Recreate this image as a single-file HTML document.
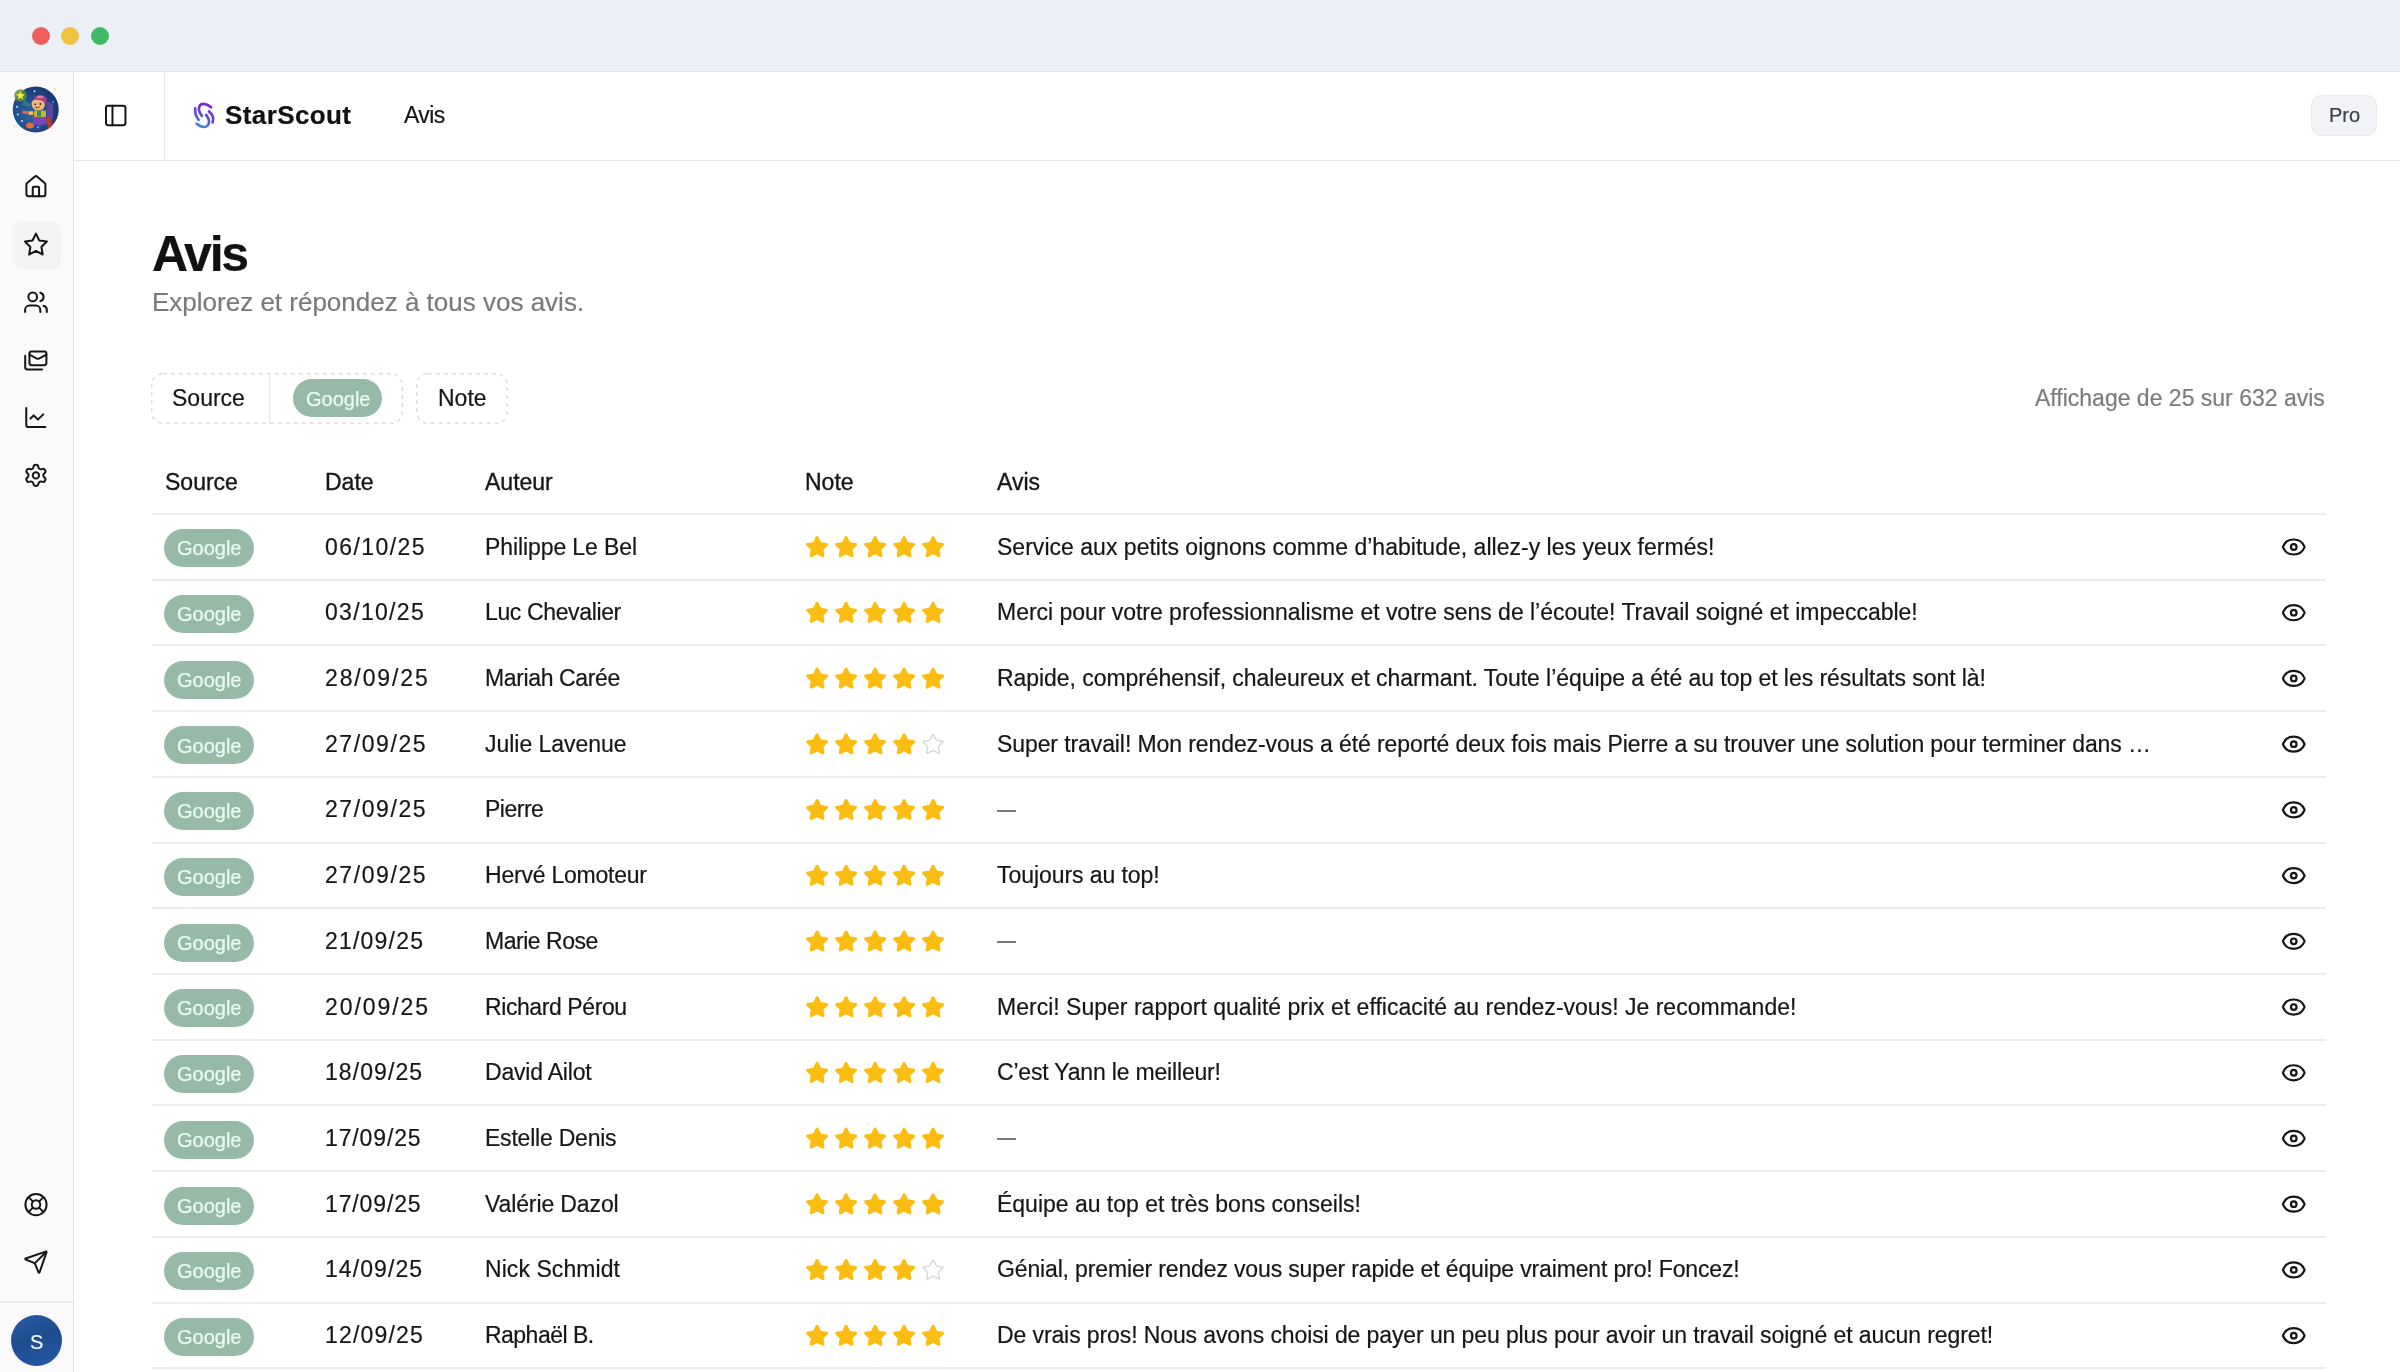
<!DOCTYPE html>
<html><head><meta charset="utf-8"><style>
*{box-sizing:border-box;margin:0;padding:0}
html,body{width:2400px;height:1372px;overflow:hidden;background:#fff;font-family:"Liberation Sans",sans-serif;color:#111;position:relative}
.a{position:absolute}
.t{position:absolute;white-space:pre;line-height:1;will-change:transform;-webkit-text-stroke:0.2px currentColor}
.tl{position:absolute;width:18px;height:18px;border-radius:50%;top:27px}
.badge{position:absolute;width:90px;height:38px;border-radius:19px;background:#97B9A7}
.hl{position:absolute;left:152px;width:2174px;height:2px;background:#EDEDED}
#ov{position:absolute;left:0;top:0;width:2400px;height:1372px;fill:none;stroke-linecap:round;stroke-linejoin:round}
</style></head><body>
<div class="a" style="left:0;top:0;width:2400px;height:72px;background:#ECF0F6"></div>
<div class="a" style="left:0;top:71px;width:2400px;height:1px;background:#E1E4E9"></div>
<div class="tl" style="left:32px;background:#EE5F5B"></div><div class="tl" style="left:61px;background:#EFC23F"></div><div class="tl" style="left:91px;background:#40B866"></div>
<div class="a" style="left:0;top:72px;width:74px;height:1300px;background:#FAFAFA;border-right:1px solid #E6E6E6"></div>
<div class="a" style="left:12px;top:221px;width:49px;height:48px;border-radius:9px;background:#F4F4F4"></div>
<div class="a" style="left:0;top:1301px;width:73px;height:2px;background:#EBEBEB"></div>
<div class="a" style="left:10.5px;top:1315.3px;width:51px;height:51px;border-radius:50%;background:linear-gradient(160deg,#2A5BA6 0%,#1E4C8E 45%,#2658A8 100%)"></div>
<div class="t" style="left:29.5px;top:1331.77px;font-size:20px;color:#F4FBFF;">S</div>
<div class="a" style="left:74px;top:72px;width:2326px;height:89px;background:#fff;border-bottom:1px solid #E6E6E6"></div>
<div class="a" style="left:164px;top:72px;width:1px;height:88px;background:#E6E6E6"></div>
<div class="t" style="left:225px;top:101.99px;font-size:26px;color:#111;font-weight:700;letter-spacing:0.4px;">StarScout</div>
<div class="t" style="left:404px;top:104.03px;font-size:23px;color:#161616;letter-spacing:-0.6px;">Avis</div>
<div class="a" style="left:2311px;top:95px;width:66px;height:41px;border-radius:10px;background:#F1F3F7;border:1px solid #E8EBEF"></div>
<div class="t" style="left:2328.5px;top:105.07px;font-size:20px;color:#3B4049;">Pro</div>
<div class="t" style="left:151.5px;top:228.68px;font-size:50px;color:#111;font-weight:700;letter-spacing:-2.2px;">Avis</div>
<div class="t" style="left:152px;top:288.99px;font-size:26px;color:#7A7A7A;">Explorez et répondez à tous vos avis.</div>
<svg class="a" style="left:150px;top:372px" width="260" height="54"><rect x="1.75" y="1.75" width="250.5" height="49.5" rx="11" fill="none" stroke="#DEDEDE" stroke-width="1.5" stroke-dasharray="4 4"/></svg>
<div class="a" style="left:269px;top:374px;width:1px;height:49px;background:#E6E6E6"></div>
<div class="t" style="left:172px;top:387.13px;font-size:23px;color:#161616;">Source</div>
<div class="badge" style="left:293px;top:379px;width:89px"></div>
<div class="t" style="left:306px;top:388.57px;font-size:20px;color:#EAFBF0;-webkit-text-stroke:0.25px #EAFBF0;">Google</div>
<svg class="a" style="left:415px;top:372px" width="96" height="54"><rect x="1.75" y="1.75" width="90.5" height="49.5" rx="11" fill="none" stroke="#DEDEDE" stroke-width="1.5" stroke-dasharray="4 4"/></svg>
<div class="t" style="left:437.5px;top:387.13px;font-size:23px;color:#161616;">Note</div>
<div class="t" style="right:75px;top:387.03px;font-size:23px;color:#7C7C7C">Affichage de 25 sur 632 avis</div>
<div class="t" style="left:165px;top:470.53px;font-size:23px;color:#161616;-webkit-text-stroke:0.35px currentColor;">Source</div>
<div class="t" style="left:325px;top:470.53px;font-size:23px;color:#161616;-webkit-text-stroke:0.35px currentColor;">Date</div>
<div class="t" style="left:485px;top:470.53px;font-size:23px;color:#161616;-webkit-text-stroke:0.35px currentColor;">Auteur</div>
<div class="t" style="left:805px;top:470.53px;font-size:23px;color:#161616;-webkit-text-stroke:0.35px currentColor;">Note</div>
<div class="t" style="left:997px;top:470.53px;font-size:23px;color:#161616;-webkit-text-stroke:0.35px currentColor;">Avis</div>
<div class="hl" style="top:513px"></div>
<div class="badge" style="left:164px;top:529.30px"></div>
<div class="t" style="left:177px;top:538.37px;font-size:20px;color:#EAFBF0;-webkit-text-stroke:0.25px #EAFBF0;">Google</div>
<div class="t" style="left:325px;top:535.53px;font-size:23px;color:#161616;letter-spacing:1.437px;">06/10/25</div>
<div class="t" style="left:485px;top:535.53px;font-size:23px;color:#161616;letter-spacing:-0.095px;">Philippe Le Bel</div>
<div class="t" style="left:997px;top:535.53px;font-size:23px;color:#161616;letter-spacing:0.022px;">Service aux petits oignons comme d’habitude, allez-y les yeux fermés!</div>
<div class="hl" style="top:578.72px"></div>
<div class="badge" style="left:164px;top:595.02px"></div>
<div class="t" style="left:177px;top:604.09px;font-size:20px;color:#EAFBF0;-webkit-text-stroke:0.25px #EAFBF0;">Google</div>
<div class="t" style="left:325px;top:601.25px;font-size:23px;color:#161616;letter-spacing:1.309px;">03/10/25</div>
<div class="t" style="left:485px;top:601.25px;font-size:23px;color:#161616;letter-spacing:-0.364px;">Luc Chevalier</div>
<div class="t" style="left:997px;top:601.25px;font-size:23px;color:#161616;letter-spacing:-0.026px;">Merci pour votre professionnalisme et votre sens de l’écoute! Travail soigné et impeccable!</div>
<div class="hl" style="top:644.44px"></div>
<div class="badge" style="left:164px;top:660.74px"></div>
<div class="t" style="left:177px;top:669.81px;font-size:20px;color:#EAFBF0;-webkit-text-stroke:0.25px #EAFBF0;">Google</div>
<div class="t" style="left:325px;top:666.97px;font-size:23px;color:#161616;letter-spacing:1.895px;">28/09/25</div>
<div class="t" style="left:485px;top:666.97px;font-size:23px;color:#161616;letter-spacing:-0.377px;">Mariah Carée</div>
<div class="t" style="left:997px;top:666.97px;font-size:23px;color:#161616;letter-spacing:-0.054px;">Rapide, compréhensif, chaleureux et charmant. Toute l’équipe a été au top et les résultats sont là!</div>
<div class="hl" style="top:710.16px"></div>
<div class="badge" style="left:164px;top:726.46px"></div>
<div class="t" style="left:177px;top:735.53px;font-size:20px;color:#EAFBF0;-webkit-text-stroke:0.25px #EAFBF0;">Google</div>
<div class="t" style="left:325px;top:732.69px;font-size:23px;color:#161616;letter-spacing:1.58px;">27/09/25</div>
<div class="t" style="left:485px;top:732.69px;font-size:23px;color:#161616;letter-spacing:-0.029px;">Julie Lavenue</div>
<div class="t" style="left:997px;top:732.69px;font-size:23px;color:#161616;letter-spacing:-0.095px;">Super travail! Mon rendez-vous a été reporté deux fois mais Pierre a su trouver une solution pour terminer dans …</div>
<div class="hl" style="top:775.88px"></div>
<div class="badge" style="left:164px;top:792.18px"></div>
<div class="t" style="left:177px;top:801.25px;font-size:20px;color:#EAFBF0;-webkit-text-stroke:0.25px #EAFBF0;">Google</div>
<div class="t" style="left:325px;top:798.41px;font-size:23px;color:#161616;letter-spacing:1.58px;">27/09/25</div>
<div class="t" style="left:485px;top:798.41px;font-size:23px;color:#161616;letter-spacing:-0.492px;">Pierre</div>
<div class="a" style="left:997px;top:810px;width:19px;height:2px;background:#7A7A7A"></div>
<div class="hl" style="top:841.60px"></div>
<div class="badge" style="left:164px;top:857.90px"></div>
<div class="t" style="left:177px;top:866.97px;font-size:20px;color:#EAFBF0;-webkit-text-stroke:0.25px #EAFBF0;">Google</div>
<div class="t" style="left:325px;top:864.13px;font-size:23px;color:#161616;letter-spacing:1.58px;">27/09/25</div>
<div class="t" style="left:485px;top:864.13px;font-size:23px;color:#161616;letter-spacing:-0.227px;">Hervé Lomoteur</div>
<div class="t" style="left:997px;top:864.13px;font-size:23px;color:#161616;letter-spacing:-0.065px;">Toujours au top!</div>
<div class="hl" style="top:907.32px"></div>
<div class="badge" style="left:164px;top:923.62px"></div>
<div class="t" style="left:177px;top:932.69px;font-size:20px;color:#EAFBF0;-webkit-text-stroke:0.25px #EAFBF0;">Google</div>
<div class="t" style="left:325px;top:929.85px;font-size:23px;color:#161616;letter-spacing:1.209px;">21/09/25</div>
<div class="t" style="left:485px;top:929.85px;font-size:23px;color:#161616;letter-spacing:-0.467px;">Marie Rose</div>
<div class="a" style="left:997px;top:941px;width:19px;height:2px;background:#7A7A7A"></div>
<div class="hl" style="top:973.04px"></div>
<div class="badge" style="left:164px;top:989.34px"></div>
<div class="t" style="left:177px;top:998.41px;font-size:20px;color:#EAFBF0;-webkit-text-stroke:0.25px #EAFBF0;">Google</div>
<div class="t" style="left:325px;top:995.57px;font-size:23px;color:#161616;letter-spacing:1.923px;">20/09/25</div>
<div class="t" style="left:485px;top:995.57px;font-size:23px;color:#161616;letter-spacing:-0.411px;">Richard Pérou</div>
<div class="t" style="left:997px;top:995.57px;font-size:23px;color:#161616;letter-spacing:0.011px;">Merci! Super rapport qualité prix et efficacité au rendez-vous! Je recommande!</div>
<div class="hl" style="top:1038.76px"></div>
<div class="badge" style="left:164px;top:1055.06px"></div>
<div class="t" style="left:177px;top:1064.13px;font-size:20px;color:#EAFBF0;-webkit-text-stroke:0.25px #EAFBF0;">Google</div>
<div class="t" style="left:325px;top:1061.29px;font-size:23px;color:#161616;letter-spacing:1.08px;">18/09/25</div>
<div class="t" style="left:485px;top:1061.29px;font-size:23px;color:#161616;letter-spacing:-0.204px;">David Ailot</div>
<div class="t" style="left:997px;top:1061.29px;font-size:23px;color:#161616;letter-spacing:-0.182px;">C’est Yann le meilleur!</div>
<div class="hl" style="top:1104.48px"></div>
<div class="badge" style="left:164px;top:1120.78px"></div>
<div class="t" style="left:177px;top:1129.85px;font-size:20px;color:#EAFBF0;-webkit-text-stroke:0.25px #EAFBF0;">Google</div>
<div class="t" style="left:325px;top:1127.01px;font-size:23px;color:#161616;letter-spacing:0.866px;">17/09/25</div>
<div class="t" style="left:485px;top:1127.01px;font-size:23px;color:#161616;letter-spacing:-0.219px;">Estelle Denis</div>
<div class="a" style="left:997px;top:1138px;width:19px;height:2px;background:#7A7A7A"></div>
<div class="hl" style="top:1170.20px"></div>
<div class="badge" style="left:164px;top:1186.50px"></div>
<div class="t" style="left:177px;top:1195.57px;font-size:20px;color:#EAFBF0;-webkit-text-stroke:0.25px #EAFBF0;">Google</div>
<div class="t" style="left:325px;top:1192.73px;font-size:23px;color:#161616;letter-spacing:0.866px;">17/09/25</div>
<div class="t" style="left:485px;top:1192.73px;font-size:23px;color:#161616;letter-spacing:-0.114px;">Valérie Dazol</div>
<div class="t" style="left:997px;top:1192.73px;font-size:23px;color:#161616;letter-spacing:-0.014px;">Équipe au top et très bons conseils!</div>
<div class="hl" style="top:1235.92px"></div>
<div class="badge" style="left:164px;top:1252.22px"></div>
<div class="t" style="left:177px;top:1261.29px;font-size:20px;color:#EAFBF0;-webkit-text-stroke:0.25px #EAFBF0;">Google</div>
<div class="t" style="left:325px;top:1258.45px;font-size:23px;color:#161616;letter-spacing:1.08px;">14/09/25</div>
<div class="t" style="left:485px;top:1258.45px;font-size:23px;color:#161616;letter-spacing:0.063px;">Nick Schmidt</div>
<div class="t" style="left:997px;top:1258.45px;font-size:23px;color:#161616;letter-spacing:-0.145px;">Génial, premier rendez vous super rapide et équipe vraiment pro! Foncez!</div>
<div class="hl" style="top:1301.64px"></div>
<div class="badge" style="left:164px;top:1317.94px"></div>
<div class="t" style="left:177px;top:1327.01px;font-size:20px;color:#EAFBF0;-webkit-text-stroke:0.25px #EAFBF0;">Google</div>
<div class="t" style="left:325px;top:1324.17px;font-size:23px;color:#161616;letter-spacing:1.166px;">12/09/25</div>
<div class="t" style="left:485px;top:1324.17px;font-size:23px;color:#161616;letter-spacing:-0.523px;">Raphaël B.</div>
<div class="t" style="left:997px;top:1324.17px;font-size:23px;color:#161616;letter-spacing:-0.103px;">De vrais pros! Nous avons choisi de payer un peu plus pour avoir un travail soigné et aucun regret!</div>
<div class="hl" style="top:1367.36px"></div>
<svg id="ov" viewBox="0 0 2400 1372">
<path transform="translate(805.10,535.10)" d="M11.525 2.295a.53.53 0 0 1 .95 0l2.31 4.679a2.123 2.123 0 0 0 1.595 1.16l5.166.756a.53.53 0 0 1 .294.904l-3.736 3.638a2.123 2.123 0 0 0-.611 1.878l.882 5.14a.53.53 0 0 1-.771.56l-4.618-2.428a2.122 2.122 0 0 0-1.973 0L6.396 21.01a.53.53 0 0 1-.77-.56l.881-5.139a2.122 2.122 0 0 0-.611-1.879L2.16 9.795a.53.53 0 0 1 .294-.906l5.165-.755a2.122 2.122 0 0 0 1.597-1.16z" fill="#FBBD12" stroke="#FBBD12" stroke-width="2"/>
<path transform="translate(834.10,535.10)" d="M11.525 2.295a.53.53 0 0 1 .95 0l2.31 4.679a2.123 2.123 0 0 0 1.595 1.16l5.166.756a.53.53 0 0 1 .294.904l-3.736 3.638a2.123 2.123 0 0 0-.611 1.878l.882 5.14a.53.53 0 0 1-.771.56l-4.618-2.428a2.122 2.122 0 0 0-1.973 0L6.396 21.01a.53.53 0 0 1-.77-.56l.881-5.139a2.122 2.122 0 0 0-.611-1.879L2.16 9.795a.53.53 0 0 1 .294-.906l5.165-.755a2.122 2.122 0 0 0 1.597-1.16z" fill="#FBBD12" stroke="#FBBD12" stroke-width="2"/>
<path transform="translate(863.10,535.10)" d="M11.525 2.295a.53.53 0 0 1 .95 0l2.31 4.679a2.123 2.123 0 0 0 1.595 1.16l5.166.756a.53.53 0 0 1 .294.904l-3.736 3.638a2.123 2.123 0 0 0-.611 1.878l.882 5.14a.53.53 0 0 1-.771.56l-4.618-2.428a2.122 2.122 0 0 0-1.973 0L6.396 21.01a.53.53 0 0 1-.77-.56l.881-5.139a2.122 2.122 0 0 0-.611-1.879L2.16 9.795a.53.53 0 0 1 .294-.906l5.165-.755a2.122 2.122 0 0 0 1.597-1.16z" fill="#FBBD12" stroke="#FBBD12" stroke-width="2"/>
<path transform="translate(892.10,535.10)" d="M11.525 2.295a.53.53 0 0 1 .95 0l2.31 4.679a2.123 2.123 0 0 0 1.595 1.16l5.166.756a.53.53 0 0 1 .294.904l-3.736 3.638a2.123 2.123 0 0 0-.611 1.878l.882 5.14a.53.53 0 0 1-.771.56l-4.618-2.428a2.122 2.122 0 0 0-1.973 0L6.396 21.01a.53.53 0 0 1-.77-.56l.881-5.139a2.122 2.122 0 0 0-.611-1.879L2.16 9.795a.53.53 0 0 1 .294-.906l5.165-.755a2.122 2.122 0 0 0 1.597-1.16z" fill="#FBBD12" stroke="#FBBD12" stroke-width="2"/>
<path transform="translate(921.10,535.10)" d="M11.525 2.295a.53.53 0 0 1 .95 0l2.31 4.679a2.123 2.123 0 0 0 1.595 1.16l5.166.756a.53.53 0 0 1 .294.904l-3.736 3.638a2.123 2.123 0 0 0-.611 1.878l.882 5.14a.53.53 0 0 1-.771.56l-4.618-2.428a2.122 2.122 0 0 0-1.973 0L6.396 21.01a.53.53 0 0 1-.77-.56l.881-5.139a2.122 2.122 0 0 0-.611-1.879L2.16 9.795a.53.53 0 0 1 .294-.906l5.165-.755a2.122 2.122 0 0 0 1.597-1.16z" fill="#FBBD12" stroke="#FBBD12" stroke-width="2"/>
<g transform="translate(2280.85,534.10) scale(1.075)" stroke="#161616" stroke-width="2.046511627906977"><path d="M2.062 12.348a1 1 0 0 1 0-.696 10.75 10.75 0 0 1 19.876 0 1 1 0 0 1 0 .696 10.75 10.75 0 0 1-19.876 0"/><circle cx="12" cy="12" r="2.6"/></g>
<path transform="translate(805.10,600.82)" d="M11.525 2.295a.53.53 0 0 1 .95 0l2.31 4.679a2.123 2.123 0 0 0 1.595 1.16l5.166.756a.53.53 0 0 1 .294.904l-3.736 3.638a2.123 2.123 0 0 0-.611 1.878l.882 5.14a.53.53 0 0 1-.771.56l-4.618-2.428a2.122 2.122 0 0 0-1.973 0L6.396 21.01a.53.53 0 0 1-.77-.56l.881-5.139a2.122 2.122 0 0 0-.611-1.879L2.16 9.795a.53.53 0 0 1 .294-.906l5.165-.755a2.122 2.122 0 0 0 1.597-1.16z" fill="#FBBD12" stroke="#FBBD12" stroke-width="2"/>
<path transform="translate(834.10,600.82)" d="M11.525 2.295a.53.53 0 0 1 .95 0l2.31 4.679a2.123 2.123 0 0 0 1.595 1.16l5.166.756a.53.53 0 0 1 .294.904l-3.736 3.638a2.123 2.123 0 0 0-.611 1.878l.882 5.14a.53.53 0 0 1-.771.56l-4.618-2.428a2.122 2.122 0 0 0-1.973 0L6.396 21.01a.53.53 0 0 1-.77-.56l.881-5.139a2.122 2.122 0 0 0-.611-1.879L2.16 9.795a.53.53 0 0 1 .294-.906l5.165-.755a2.122 2.122 0 0 0 1.597-1.16z" fill="#FBBD12" stroke="#FBBD12" stroke-width="2"/>
<path transform="translate(863.10,600.82)" d="M11.525 2.295a.53.53 0 0 1 .95 0l2.31 4.679a2.123 2.123 0 0 0 1.595 1.16l5.166.756a.53.53 0 0 1 .294.904l-3.736 3.638a2.123 2.123 0 0 0-.611 1.878l.882 5.14a.53.53 0 0 1-.771.56l-4.618-2.428a2.122 2.122 0 0 0-1.973 0L6.396 21.01a.53.53 0 0 1-.77-.56l.881-5.139a2.122 2.122 0 0 0-.611-1.879L2.16 9.795a.53.53 0 0 1 .294-.906l5.165-.755a2.122 2.122 0 0 0 1.597-1.16z" fill="#FBBD12" stroke="#FBBD12" stroke-width="2"/>
<path transform="translate(892.10,600.82)" d="M11.525 2.295a.53.53 0 0 1 .95 0l2.31 4.679a2.123 2.123 0 0 0 1.595 1.16l5.166.756a.53.53 0 0 1 .294.904l-3.736 3.638a2.123 2.123 0 0 0-.611 1.878l.882 5.14a.53.53 0 0 1-.771.56l-4.618-2.428a2.122 2.122 0 0 0-1.973 0L6.396 21.01a.53.53 0 0 1-.77-.56l.881-5.139a2.122 2.122 0 0 0-.611-1.879L2.16 9.795a.53.53 0 0 1 .294-.906l5.165-.755a2.122 2.122 0 0 0 1.597-1.16z" fill="#FBBD12" stroke="#FBBD12" stroke-width="2"/>
<path transform="translate(921.10,600.82)" d="M11.525 2.295a.53.53 0 0 1 .95 0l2.31 4.679a2.123 2.123 0 0 0 1.595 1.16l5.166.756a.53.53 0 0 1 .294.904l-3.736 3.638a2.123 2.123 0 0 0-.611 1.878l.882 5.14a.53.53 0 0 1-.771.56l-4.618-2.428a2.122 2.122 0 0 0-1.973 0L6.396 21.01a.53.53 0 0 1-.77-.56l.881-5.139a2.122 2.122 0 0 0-.611-1.879L2.16 9.795a.53.53 0 0 1 .294-.906l5.165-.755a2.122 2.122 0 0 0 1.597-1.16z" fill="#FBBD12" stroke="#FBBD12" stroke-width="2"/>
<g transform="translate(2280.85,599.82) scale(1.075)" stroke="#161616" stroke-width="2.046511627906977"><path d="M2.062 12.348a1 1 0 0 1 0-.696 10.75 10.75 0 0 1 19.876 0 1 1 0 0 1 0 .696 10.75 10.75 0 0 1-19.876 0"/><circle cx="12" cy="12" r="2.6"/></g>
<path transform="translate(805.10,666.54)" d="M11.525 2.295a.53.53 0 0 1 .95 0l2.31 4.679a2.123 2.123 0 0 0 1.595 1.16l5.166.756a.53.53 0 0 1 .294.904l-3.736 3.638a2.123 2.123 0 0 0-.611 1.878l.882 5.14a.53.53 0 0 1-.771.56l-4.618-2.428a2.122 2.122 0 0 0-1.973 0L6.396 21.01a.53.53 0 0 1-.77-.56l.881-5.139a2.122 2.122 0 0 0-.611-1.879L2.16 9.795a.53.53 0 0 1 .294-.906l5.165-.755a2.122 2.122 0 0 0 1.597-1.16z" fill="#FBBD12" stroke="#FBBD12" stroke-width="2"/>
<path transform="translate(834.10,666.54)" d="M11.525 2.295a.53.53 0 0 1 .95 0l2.31 4.679a2.123 2.123 0 0 0 1.595 1.16l5.166.756a.53.53 0 0 1 .294.904l-3.736 3.638a2.123 2.123 0 0 0-.611 1.878l.882 5.14a.53.53 0 0 1-.771.56l-4.618-2.428a2.122 2.122 0 0 0-1.973 0L6.396 21.01a.53.53 0 0 1-.77-.56l.881-5.139a2.122 2.122 0 0 0-.611-1.879L2.16 9.795a.53.53 0 0 1 .294-.906l5.165-.755a2.122 2.122 0 0 0 1.597-1.16z" fill="#FBBD12" stroke="#FBBD12" stroke-width="2"/>
<path transform="translate(863.10,666.54)" d="M11.525 2.295a.53.53 0 0 1 .95 0l2.31 4.679a2.123 2.123 0 0 0 1.595 1.16l5.166.756a.53.53 0 0 1 .294.904l-3.736 3.638a2.123 2.123 0 0 0-.611 1.878l.882 5.14a.53.53 0 0 1-.771.56l-4.618-2.428a2.122 2.122 0 0 0-1.973 0L6.396 21.01a.53.53 0 0 1-.77-.56l.881-5.139a2.122 2.122 0 0 0-.611-1.879L2.16 9.795a.53.53 0 0 1 .294-.906l5.165-.755a2.122 2.122 0 0 0 1.597-1.16z" fill="#FBBD12" stroke="#FBBD12" stroke-width="2"/>
<path transform="translate(892.10,666.54)" d="M11.525 2.295a.53.53 0 0 1 .95 0l2.31 4.679a2.123 2.123 0 0 0 1.595 1.16l5.166.756a.53.53 0 0 1 .294.904l-3.736 3.638a2.123 2.123 0 0 0-.611 1.878l.882 5.14a.53.53 0 0 1-.771.56l-4.618-2.428a2.122 2.122 0 0 0-1.973 0L6.396 21.01a.53.53 0 0 1-.77-.56l.881-5.139a2.122 2.122 0 0 0-.611-1.879L2.16 9.795a.53.53 0 0 1 .294-.906l5.165-.755a2.122 2.122 0 0 0 1.597-1.16z" fill="#FBBD12" stroke="#FBBD12" stroke-width="2"/>
<path transform="translate(921.10,666.54)" d="M11.525 2.295a.53.53 0 0 1 .95 0l2.31 4.679a2.123 2.123 0 0 0 1.595 1.16l5.166.756a.53.53 0 0 1 .294.904l-3.736 3.638a2.123 2.123 0 0 0-.611 1.878l.882 5.14a.53.53 0 0 1-.771.56l-4.618-2.428a2.122 2.122 0 0 0-1.973 0L6.396 21.01a.53.53 0 0 1-.77-.56l.881-5.139a2.122 2.122 0 0 0-.611-1.879L2.16 9.795a.53.53 0 0 1 .294-.906l5.165-.755a2.122 2.122 0 0 0 1.597-1.16z" fill="#FBBD12" stroke="#FBBD12" stroke-width="2"/>
<g transform="translate(2280.85,665.54) scale(1.075)" stroke="#161616" stroke-width="2.046511627906977"><path d="M2.062 12.348a1 1 0 0 1 0-.696 10.75 10.75 0 0 1 19.876 0 1 1 0 0 1 0 .696 10.75 10.75 0 0 1-19.876 0"/><circle cx="12" cy="12" r="2.6"/></g>
<path transform="translate(805.10,732.26)" d="M11.525 2.295a.53.53 0 0 1 .95 0l2.31 4.679a2.123 2.123 0 0 0 1.595 1.16l5.166.756a.53.53 0 0 1 .294.904l-3.736 3.638a2.123 2.123 0 0 0-.611 1.878l.882 5.14a.53.53 0 0 1-.771.56l-4.618-2.428a2.122 2.122 0 0 0-1.973 0L6.396 21.01a.53.53 0 0 1-.77-.56l.881-5.139a2.122 2.122 0 0 0-.611-1.879L2.16 9.795a.53.53 0 0 1 .294-.906l5.165-.755a2.122 2.122 0 0 0 1.597-1.16z" fill="#FBBD12" stroke="#FBBD12" stroke-width="2"/>
<path transform="translate(834.10,732.26)" d="M11.525 2.295a.53.53 0 0 1 .95 0l2.31 4.679a2.123 2.123 0 0 0 1.595 1.16l5.166.756a.53.53 0 0 1 .294.904l-3.736 3.638a2.123 2.123 0 0 0-.611 1.878l.882 5.14a.53.53 0 0 1-.771.56l-4.618-2.428a2.122 2.122 0 0 0-1.973 0L6.396 21.01a.53.53 0 0 1-.77-.56l.881-5.139a2.122 2.122 0 0 0-.611-1.879L2.16 9.795a.53.53 0 0 1 .294-.906l5.165-.755a2.122 2.122 0 0 0 1.597-1.16z" fill="#FBBD12" stroke="#FBBD12" stroke-width="2"/>
<path transform="translate(863.10,732.26)" d="M11.525 2.295a.53.53 0 0 1 .95 0l2.31 4.679a2.123 2.123 0 0 0 1.595 1.16l5.166.756a.53.53 0 0 1 .294.904l-3.736 3.638a2.123 2.123 0 0 0-.611 1.878l.882 5.14a.53.53 0 0 1-.771.56l-4.618-2.428a2.122 2.122 0 0 0-1.973 0L6.396 21.01a.53.53 0 0 1-.77-.56l.881-5.139a2.122 2.122 0 0 0-.611-1.879L2.16 9.795a.53.53 0 0 1 .294-.906l5.165-.755a2.122 2.122 0 0 0 1.597-1.16z" fill="#FBBD12" stroke="#FBBD12" stroke-width="2"/>
<path transform="translate(892.10,732.26)" d="M11.525 2.295a.53.53 0 0 1 .95 0l2.31 4.679a2.123 2.123 0 0 0 1.595 1.16l5.166.756a.53.53 0 0 1 .294.904l-3.736 3.638a2.123 2.123 0 0 0-.611 1.878l.882 5.14a.53.53 0 0 1-.771.56l-4.618-2.428a2.122 2.122 0 0 0-1.973 0L6.396 21.01a.53.53 0 0 1-.77-.56l.881-5.139a2.122 2.122 0 0 0-.611-1.879L2.16 9.795a.53.53 0 0 1 .294-.906l5.165-.755a2.122 2.122 0 0 0 1.597-1.16z" fill="#FBBD12" stroke="#FBBD12" stroke-width="2"/>
<path transform="translate(921.10,732.26)" d="M11.525 2.295a.53.53 0 0 1 .95 0l2.31 4.679a2.123 2.123 0 0 0 1.595 1.16l5.166.756a.53.53 0 0 1 .294.904l-3.736 3.638a2.123 2.123 0 0 0-.611 1.878l.882 5.14a.53.53 0 0 1-.771.56l-4.618-2.428a2.122 2.122 0 0 0-1.973 0L6.396 21.01a.53.53 0 0 1-.77-.56l.881-5.139a2.122 2.122 0 0 0-.611-1.879L2.16 9.795a.53.53 0 0 1 .294-.906l5.165-.755a2.122 2.122 0 0 0 1.597-1.16z" fill="none" stroke="#D9D9D9" stroke-width="1.5"/>
<g transform="translate(2280.85,731.26) scale(1.075)" stroke="#161616" stroke-width="2.046511627906977"><path d="M2.062 12.348a1 1 0 0 1 0-.696 10.75 10.75 0 0 1 19.876 0 1 1 0 0 1 0 .696 10.75 10.75 0 0 1-19.876 0"/><circle cx="12" cy="12" r="2.6"/></g>
<path transform="translate(805.10,797.98)" d="M11.525 2.295a.53.53 0 0 1 .95 0l2.31 4.679a2.123 2.123 0 0 0 1.595 1.16l5.166.756a.53.53 0 0 1 .294.904l-3.736 3.638a2.123 2.123 0 0 0-.611 1.878l.882 5.14a.53.53 0 0 1-.771.56l-4.618-2.428a2.122 2.122 0 0 0-1.973 0L6.396 21.01a.53.53 0 0 1-.77-.56l.881-5.139a2.122 2.122 0 0 0-.611-1.879L2.16 9.795a.53.53 0 0 1 .294-.906l5.165-.755a2.122 2.122 0 0 0 1.597-1.16z" fill="#FBBD12" stroke="#FBBD12" stroke-width="2"/>
<path transform="translate(834.10,797.98)" d="M11.525 2.295a.53.53 0 0 1 .95 0l2.31 4.679a2.123 2.123 0 0 0 1.595 1.16l5.166.756a.53.53 0 0 1 .294.904l-3.736 3.638a2.123 2.123 0 0 0-.611 1.878l.882 5.14a.53.53 0 0 1-.771.56l-4.618-2.428a2.122 2.122 0 0 0-1.973 0L6.396 21.01a.53.53 0 0 1-.77-.56l.881-5.139a2.122 2.122 0 0 0-.611-1.879L2.16 9.795a.53.53 0 0 1 .294-.906l5.165-.755a2.122 2.122 0 0 0 1.597-1.16z" fill="#FBBD12" stroke="#FBBD12" stroke-width="2"/>
<path transform="translate(863.10,797.98)" d="M11.525 2.295a.53.53 0 0 1 .95 0l2.31 4.679a2.123 2.123 0 0 0 1.595 1.16l5.166.756a.53.53 0 0 1 .294.904l-3.736 3.638a2.123 2.123 0 0 0-.611 1.878l.882 5.14a.53.53 0 0 1-.771.56l-4.618-2.428a2.122 2.122 0 0 0-1.973 0L6.396 21.01a.53.53 0 0 1-.77-.56l.881-5.139a2.122 2.122 0 0 0-.611-1.879L2.16 9.795a.53.53 0 0 1 .294-.906l5.165-.755a2.122 2.122 0 0 0 1.597-1.16z" fill="#FBBD12" stroke="#FBBD12" stroke-width="2"/>
<path transform="translate(892.10,797.98)" d="M11.525 2.295a.53.53 0 0 1 .95 0l2.31 4.679a2.123 2.123 0 0 0 1.595 1.16l5.166.756a.53.53 0 0 1 .294.904l-3.736 3.638a2.123 2.123 0 0 0-.611 1.878l.882 5.14a.53.53 0 0 1-.771.56l-4.618-2.428a2.122 2.122 0 0 0-1.973 0L6.396 21.01a.53.53 0 0 1-.77-.56l.881-5.139a2.122 2.122 0 0 0-.611-1.879L2.16 9.795a.53.53 0 0 1 .294-.906l5.165-.755a2.122 2.122 0 0 0 1.597-1.16z" fill="#FBBD12" stroke="#FBBD12" stroke-width="2"/>
<path transform="translate(921.10,797.98)" d="M11.525 2.295a.53.53 0 0 1 .95 0l2.31 4.679a2.123 2.123 0 0 0 1.595 1.16l5.166.756a.53.53 0 0 1 .294.904l-3.736 3.638a2.123 2.123 0 0 0-.611 1.878l.882 5.14a.53.53 0 0 1-.771.56l-4.618-2.428a2.122 2.122 0 0 0-1.973 0L6.396 21.01a.53.53 0 0 1-.77-.56l.881-5.139a2.122 2.122 0 0 0-.611-1.879L2.16 9.795a.53.53 0 0 1 .294-.906l5.165-.755a2.122 2.122 0 0 0 1.597-1.16z" fill="#FBBD12" stroke="#FBBD12" stroke-width="2"/>
<g transform="translate(2280.85,796.98) scale(1.075)" stroke="#161616" stroke-width="2.046511627906977"><path d="M2.062 12.348a1 1 0 0 1 0-.696 10.75 10.75 0 0 1 19.876 0 1 1 0 0 1 0 .696 10.75 10.75 0 0 1-19.876 0"/><circle cx="12" cy="12" r="2.6"/></g>
<path transform="translate(805.10,863.70)" d="M11.525 2.295a.53.53 0 0 1 .95 0l2.31 4.679a2.123 2.123 0 0 0 1.595 1.16l5.166.756a.53.53 0 0 1 .294.904l-3.736 3.638a2.123 2.123 0 0 0-.611 1.878l.882 5.14a.53.53 0 0 1-.771.56l-4.618-2.428a2.122 2.122 0 0 0-1.973 0L6.396 21.01a.53.53 0 0 1-.77-.56l.881-5.139a2.122 2.122 0 0 0-.611-1.879L2.16 9.795a.53.53 0 0 1 .294-.906l5.165-.755a2.122 2.122 0 0 0 1.597-1.16z" fill="#FBBD12" stroke="#FBBD12" stroke-width="2"/>
<path transform="translate(834.10,863.70)" d="M11.525 2.295a.53.53 0 0 1 .95 0l2.31 4.679a2.123 2.123 0 0 0 1.595 1.16l5.166.756a.53.53 0 0 1 .294.904l-3.736 3.638a2.123 2.123 0 0 0-.611 1.878l.882 5.14a.53.53 0 0 1-.771.56l-4.618-2.428a2.122 2.122 0 0 0-1.973 0L6.396 21.01a.53.53 0 0 1-.77-.56l.881-5.139a2.122 2.122 0 0 0-.611-1.879L2.16 9.795a.53.53 0 0 1 .294-.906l5.165-.755a2.122 2.122 0 0 0 1.597-1.16z" fill="#FBBD12" stroke="#FBBD12" stroke-width="2"/>
<path transform="translate(863.10,863.70)" d="M11.525 2.295a.53.53 0 0 1 .95 0l2.31 4.679a2.123 2.123 0 0 0 1.595 1.16l5.166.756a.53.53 0 0 1 .294.904l-3.736 3.638a2.123 2.123 0 0 0-.611 1.878l.882 5.14a.53.53 0 0 1-.771.56l-4.618-2.428a2.122 2.122 0 0 0-1.973 0L6.396 21.01a.53.53 0 0 1-.77-.56l.881-5.139a2.122 2.122 0 0 0-.611-1.879L2.16 9.795a.53.53 0 0 1 .294-.906l5.165-.755a2.122 2.122 0 0 0 1.597-1.16z" fill="#FBBD12" stroke="#FBBD12" stroke-width="2"/>
<path transform="translate(892.10,863.70)" d="M11.525 2.295a.53.53 0 0 1 .95 0l2.31 4.679a2.123 2.123 0 0 0 1.595 1.16l5.166.756a.53.53 0 0 1 .294.904l-3.736 3.638a2.123 2.123 0 0 0-.611 1.878l.882 5.14a.53.53 0 0 1-.771.56l-4.618-2.428a2.122 2.122 0 0 0-1.973 0L6.396 21.01a.53.53 0 0 1-.77-.56l.881-5.139a2.122 2.122 0 0 0-.611-1.879L2.16 9.795a.53.53 0 0 1 .294-.906l5.165-.755a2.122 2.122 0 0 0 1.597-1.16z" fill="#FBBD12" stroke="#FBBD12" stroke-width="2"/>
<path transform="translate(921.10,863.70)" d="M11.525 2.295a.53.53 0 0 1 .95 0l2.31 4.679a2.123 2.123 0 0 0 1.595 1.16l5.166.756a.53.53 0 0 1 .294.904l-3.736 3.638a2.123 2.123 0 0 0-.611 1.878l.882 5.14a.53.53 0 0 1-.771.56l-4.618-2.428a2.122 2.122 0 0 0-1.973 0L6.396 21.01a.53.53 0 0 1-.77-.56l.881-5.139a2.122 2.122 0 0 0-.611-1.879L2.16 9.795a.53.53 0 0 1 .294-.906l5.165-.755a2.122 2.122 0 0 0 1.597-1.16z" fill="#FBBD12" stroke="#FBBD12" stroke-width="2"/>
<g transform="translate(2280.85,862.70) scale(1.075)" stroke="#161616" stroke-width="2.046511627906977"><path d="M2.062 12.348a1 1 0 0 1 0-.696 10.75 10.75 0 0 1 19.876 0 1 1 0 0 1 0 .696 10.75 10.75 0 0 1-19.876 0"/><circle cx="12" cy="12" r="2.6"/></g>
<path transform="translate(805.10,929.42)" d="M11.525 2.295a.53.53 0 0 1 .95 0l2.31 4.679a2.123 2.123 0 0 0 1.595 1.16l5.166.756a.53.53 0 0 1 .294.904l-3.736 3.638a2.123 2.123 0 0 0-.611 1.878l.882 5.14a.53.53 0 0 1-.771.56l-4.618-2.428a2.122 2.122 0 0 0-1.973 0L6.396 21.01a.53.53 0 0 1-.77-.56l.881-5.139a2.122 2.122 0 0 0-.611-1.879L2.16 9.795a.53.53 0 0 1 .294-.906l5.165-.755a2.122 2.122 0 0 0 1.597-1.16z" fill="#FBBD12" stroke="#FBBD12" stroke-width="2"/>
<path transform="translate(834.10,929.42)" d="M11.525 2.295a.53.53 0 0 1 .95 0l2.31 4.679a2.123 2.123 0 0 0 1.595 1.16l5.166.756a.53.53 0 0 1 .294.904l-3.736 3.638a2.123 2.123 0 0 0-.611 1.878l.882 5.14a.53.53 0 0 1-.771.56l-4.618-2.428a2.122 2.122 0 0 0-1.973 0L6.396 21.01a.53.53 0 0 1-.77-.56l.881-5.139a2.122 2.122 0 0 0-.611-1.879L2.16 9.795a.53.53 0 0 1 .294-.906l5.165-.755a2.122 2.122 0 0 0 1.597-1.16z" fill="#FBBD12" stroke="#FBBD12" stroke-width="2"/>
<path transform="translate(863.10,929.42)" d="M11.525 2.295a.53.53 0 0 1 .95 0l2.31 4.679a2.123 2.123 0 0 0 1.595 1.16l5.166.756a.53.53 0 0 1 .294.904l-3.736 3.638a2.123 2.123 0 0 0-.611 1.878l.882 5.14a.53.53 0 0 1-.771.56l-4.618-2.428a2.122 2.122 0 0 0-1.973 0L6.396 21.01a.53.53 0 0 1-.77-.56l.881-5.139a2.122 2.122 0 0 0-.611-1.879L2.16 9.795a.53.53 0 0 1 .294-.906l5.165-.755a2.122 2.122 0 0 0 1.597-1.16z" fill="#FBBD12" stroke="#FBBD12" stroke-width="2"/>
<path transform="translate(892.10,929.42)" d="M11.525 2.295a.53.53 0 0 1 .95 0l2.31 4.679a2.123 2.123 0 0 0 1.595 1.16l5.166.756a.53.53 0 0 1 .294.904l-3.736 3.638a2.123 2.123 0 0 0-.611 1.878l.882 5.14a.53.53 0 0 1-.771.56l-4.618-2.428a2.122 2.122 0 0 0-1.973 0L6.396 21.01a.53.53 0 0 1-.77-.56l.881-5.139a2.122 2.122 0 0 0-.611-1.879L2.16 9.795a.53.53 0 0 1 .294-.906l5.165-.755a2.122 2.122 0 0 0 1.597-1.16z" fill="#FBBD12" stroke="#FBBD12" stroke-width="2"/>
<path transform="translate(921.10,929.42)" d="M11.525 2.295a.53.53 0 0 1 .95 0l2.31 4.679a2.123 2.123 0 0 0 1.595 1.16l5.166.756a.53.53 0 0 1 .294.904l-3.736 3.638a2.123 2.123 0 0 0-.611 1.878l.882 5.14a.53.53 0 0 1-.771.56l-4.618-2.428a2.122 2.122 0 0 0-1.973 0L6.396 21.01a.53.53 0 0 1-.77-.56l.881-5.139a2.122 2.122 0 0 0-.611-1.879L2.16 9.795a.53.53 0 0 1 .294-.906l5.165-.755a2.122 2.122 0 0 0 1.597-1.16z" fill="#FBBD12" stroke="#FBBD12" stroke-width="2"/>
<g transform="translate(2280.85,928.42) scale(1.075)" stroke="#161616" stroke-width="2.046511627906977"><path d="M2.062 12.348a1 1 0 0 1 0-.696 10.75 10.75 0 0 1 19.876 0 1 1 0 0 1 0 .696 10.75 10.75 0 0 1-19.876 0"/><circle cx="12" cy="12" r="2.6"/></g>
<path transform="translate(805.10,995.14)" d="M11.525 2.295a.53.53 0 0 1 .95 0l2.31 4.679a2.123 2.123 0 0 0 1.595 1.16l5.166.756a.53.53 0 0 1 .294.904l-3.736 3.638a2.123 2.123 0 0 0-.611 1.878l.882 5.14a.53.53 0 0 1-.771.56l-4.618-2.428a2.122 2.122 0 0 0-1.973 0L6.396 21.01a.53.53 0 0 1-.77-.56l.881-5.139a2.122 2.122 0 0 0-.611-1.879L2.16 9.795a.53.53 0 0 1 .294-.906l5.165-.755a2.122 2.122 0 0 0 1.597-1.16z" fill="#FBBD12" stroke="#FBBD12" stroke-width="2"/>
<path transform="translate(834.10,995.14)" d="M11.525 2.295a.53.53 0 0 1 .95 0l2.31 4.679a2.123 2.123 0 0 0 1.595 1.16l5.166.756a.53.53 0 0 1 .294.904l-3.736 3.638a2.123 2.123 0 0 0-.611 1.878l.882 5.14a.53.53 0 0 1-.771.56l-4.618-2.428a2.122 2.122 0 0 0-1.973 0L6.396 21.01a.53.53 0 0 1-.77-.56l.881-5.139a2.122 2.122 0 0 0-.611-1.879L2.16 9.795a.53.53 0 0 1 .294-.906l5.165-.755a2.122 2.122 0 0 0 1.597-1.16z" fill="#FBBD12" stroke="#FBBD12" stroke-width="2"/>
<path transform="translate(863.10,995.14)" d="M11.525 2.295a.53.53 0 0 1 .95 0l2.31 4.679a2.123 2.123 0 0 0 1.595 1.16l5.166.756a.53.53 0 0 1 .294.904l-3.736 3.638a2.123 2.123 0 0 0-.611 1.878l.882 5.14a.53.53 0 0 1-.771.56l-4.618-2.428a2.122 2.122 0 0 0-1.973 0L6.396 21.01a.53.53 0 0 1-.77-.56l.881-5.139a2.122 2.122 0 0 0-.611-1.879L2.16 9.795a.53.53 0 0 1 .294-.906l5.165-.755a2.122 2.122 0 0 0 1.597-1.16z" fill="#FBBD12" stroke="#FBBD12" stroke-width="2"/>
<path transform="translate(892.10,995.14)" d="M11.525 2.295a.53.53 0 0 1 .95 0l2.31 4.679a2.123 2.123 0 0 0 1.595 1.16l5.166.756a.53.53 0 0 1 .294.904l-3.736 3.638a2.123 2.123 0 0 0-.611 1.878l.882 5.14a.53.53 0 0 1-.771.56l-4.618-2.428a2.122 2.122 0 0 0-1.973 0L6.396 21.01a.53.53 0 0 1-.77-.56l.881-5.139a2.122 2.122 0 0 0-.611-1.879L2.16 9.795a.53.53 0 0 1 .294-.906l5.165-.755a2.122 2.122 0 0 0 1.597-1.16z" fill="#FBBD12" stroke="#FBBD12" stroke-width="2"/>
<path transform="translate(921.10,995.14)" d="M11.525 2.295a.53.53 0 0 1 .95 0l2.31 4.679a2.123 2.123 0 0 0 1.595 1.16l5.166.756a.53.53 0 0 1 .294.904l-3.736 3.638a2.123 2.123 0 0 0-.611 1.878l.882 5.14a.53.53 0 0 1-.771.56l-4.618-2.428a2.122 2.122 0 0 0-1.973 0L6.396 21.01a.53.53 0 0 1-.77-.56l.881-5.139a2.122 2.122 0 0 0-.611-1.879L2.16 9.795a.53.53 0 0 1 .294-.906l5.165-.755a2.122 2.122 0 0 0 1.597-1.16z" fill="#FBBD12" stroke="#FBBD12" stroke-width="2"/>
<g transform="translate(2280.85,994.14) scale(1.075)" stroke="#161616" stroke-width="2.046511627906977"><path d="M2.062 12.348a1 1 0 0 1 0-.696 10.75 10.75 0 0 1 19.876 0 1 1 0 0 1 0 .696 10.75 10.75 0 0 1-19.876 0"/><circle cx="12" cy="12" r="2.6"/></g>
<path transform="translate(805.10,1060.86)" d="M11.525 2.295a.53.53 0 0 1 .95 0l2.31 4.679a2.123 2.123 0 0 0 1.595 1.16l5.166.756a.53.53 0 0 1 .294.904l-3.736 3.638a2.123 2.123 0 0 0-.611 1.878l.882 5.14a.53.53 0 0 1-.771.56l-4.618-2.428a2.122 2.122 0 0 0-1.973 0L6.396 21.01a.53.53 0 0 1-.77-.56l.881-5.139a2.122 2.122 0 0 0-.611-1.879L2.16 9.795a.53.53 0 0 1 .294-.906l5.165-.755a2.122 2.122 0 0 0 1.597-1.16z" fill="#FBBD12" stroke="#FBBD12" stroke-width="2"/>
<path transform="translate(834.10,1060.86)" d="M11.525 2.295a.53.53 0 0 1 .95 0l2.31 4.679a2.123 2.123 0 0 0 1.595 1.16l5.166.756a.53.53 0 0 1 .294.904l-3.736 3.638a2.123 2.123 0 0 0-.611 1.878l.882 5.14a.53.53 0 0 1-.771.56l-4.618-2.428a2.122 2.122 0 0 0-1.973 0L6.396 21.01a.53.53 0 0 1-.77-.56l.881-5.139a2.122 2.122 0 0 0-.611-1.879L2.16 9.795a.53.53 0 0 1 .294-.906l5.165-.755a2.122 2.122 0 0 0 1.597-1.16z" fill="#FBBD12" stroke="#FBBD12" stroke-width="2"/>
<path transform="translate(863.10,1060.86)" d="M11.525 2.295a.53.53 0 0 1 .95 0l2.31 4.679a2.123 2.123 0 0 0 1.595 1.16l5.166.756a.53.53 0 0 1 .294.904l-3.736 3.638a2.123 2.123 0 0 0-.611 1.878l.882 5.14a.53.53 0 0 1-.771.56l-4.618-2.428a2.122 2.122 0 0 0-1.973 0L6.396 21.01a.53.53 0 0 1-.77-.56l.881-5.139a2.122 2.122 0 0 0-.611-1.879L2.16 9.795a.53.53 0 0 1 .294-.906l5.165-.755a2.122 2.122 0 0 0 1.597-1.16z" fill="#FBBD12" stroke="#FBBD12" stroke-width="2"/>
<path transform="translate(892.10,1060.86)" d="M11.525 2.295a.53.53 0 0 1 .95 0l2.31 4.679a2.123 2.123 0 0 0 1.595 1.16l5.166.756a.53.53 0 0 1 .294.904l-3.736 3.638a2.123 2.123 0 0 0-.611 1.878l.882 5.14a.53.53 0 0 1-.771.56l-4.618-2.428a2.122 2.122 0 0 0-1.973 0L6.396 21.01a.53.53 0 0 1-.77-.56l.881-5.139a2.122 2.122 0 0 0-.611-1.879L2.16 9.795a.53.53 0 0 1 .294-.906l5.165-.755a2.122 2.122 0 0 0 1.597-1.16z" fill="#FBBD12" stroke="#FBBD12" stroke-width="2"/>
<path transform="translate(921.10,1060.86)" d="M11.525 2.295a.53.53 0 0 1 .95 0l2.31 4.679a2.123 2.123 0 0 0 1.595 1.16l5.166.756a.53.53 0 0 1 .294.904l-3.736 3.638a2.123 2.123 0 0 0-.611 1.878l.882 5.14a.53.53 0 0 1-.771.56l-4.618-2.428a2.122 2.122 0 0 0-1.973 0L6.396 21.01a.53.53 0 0 1-.77-.56l.881-5.139a2.122 2.122 0 0 0-.611-1.879L2.16 9.795a.53.53 0 0 1 .294-.906l5.165-.755a2.122 2.122 0 0 0 1.597-1.16z" fill="#FBBD12" stroke="#FBBD12" stroke-width="2"/>
<g transform="translate(2280.85,1059.86) scale(1.075)" stroke="#161616" stroke-width="2.046511627906977"><path d="M2.062 12.348a1 1 0 0 1 0-.696 10.75 10.75 0 0 1 19.876 0 1 1 0 0 1 0 .696 10.75 10.75 0 0 1-19.876 0"/><circle cx="12" cy="12" r="2.6"/></g>
<path transform="translate(805.10,1126.58)" d="M11.525 2.295a.53.53 0 0 1 .95 0l2.31 4.679a2.123 2.123 0 0 0 1.595 1.16l5.166.756a.53.53 0 0 1 .294.904l-3.736 3.638a2.123 2.123 0 0 0-.611 1.878l.882 5.14a.53.53 0 0 1-.771.56l-4.618-2.428a2.122 2.122 0 0 0-1.973 0L6.396 21.01a.53.53 0 0 1-.77-.56l.881-5.139a2.122 2.122 0 0 0-.611-1.879L2.16 9.795a.53.53 0 0 1 .294-.906l5.165-.755a2.122 2.122 0 0 0 1.597-1.16z" fill="#FBBD12" stroke="#FBBD12" stroke-width="2"/>
<path transform="translate(834.10,1126.58)" d="M11.525 2.295a.53.53 0 0 1 .95 0l2.31 4.679a2.123 2.123 0 0 0 1.595 1.16l5.166.756a.53.53 0 0 1 .294.904l-3.736 3.638a2.123 2.123 0 0 0-.611 1.878l.882 5.14a.53.53 0 0 1-.771.56l-4.618-2.428a2.122 2.122 0 0 0-1.973 0L6.396 21.01a.53.53 0 0 1-.77-.56l.881-5.139a2.122 2.122 0 0 0-.611-1.879L2.16 9.795a.53.53 0 0 1 .294-.906l5.165-.755a2.122 2.122 0 0 0 1.597-1.16z" fill="#FBBD12" stroke="#FBBD12" stroke-width="2"/>
<path transform="translate(863.10,1126.58)" d="M11.525 2.295a.53.53 0 0 1 .95 0l2.31 4.679a2.123 2.123 0 0 0 1.595 1.16l5.166.756a.53.53 0 0 1 .294.904l-3.736 3.638a2.123 2.123 0 0 0-.611 1.878l.882 5.14a.53.53 0 0 1-.771.56l-4.618-2.428a2.122 2.122 0 0 0-1.973 0L6.396 21.01a.53.53 0 0 1-.77-.56l.881-5.139a2.122 2.122 0 0 0-.611-1.879L2.16 9.795a.53.53 0 0 1 .294-.906l5.165-.755a2.122 2.122 0 0 0 1.597-1.16z" fill="#FBBD12" stroke="#FBBD12" stroke-width="2"/>
<path transform="translate(892.10,1126.58)" d="M11.525 2.295a.53.53 0 0 1 .95 0l2.31 4.679a2.123 2.123 0 0 0 1.595 1.16l5.166.756a.53.53 0 0 1 .294.904l-3.736 3.638a2.123 2.123 0 0 0-.611 1.878l.882 5.14a.53.53 0 0 1-.771.56l-4.618-2.428a2.122 2.122 0 0 0-1.973 0L6.396 21.01a.53.53 0 0 1-.77-.56l.881-5.139a2.122 2.122 0 0 0-.611-1.879L2.16 9.795a.53.53 0 0 1 .294-.906l5.165-.755a2.122 2.122 0 0 0 1.597-1.16z" fill="#FBBD12" stroke="#FBBD12" stroke-width="2"/>
<path transform="translate(921.10,1126.58)" d="M11.525 2.295a.53.53 0 0 1 .95 0l2.31 4.679a2.123 2.123 0 0 0 1.595 1.16l5.166.756a.53.53 0 0 1 .294.904l-3.736 3.638a2.123 2.123 0 0 0-.611 1.878l.882 5.14a.53.53 0 0 1-.771.56l-4.618-2.428a2.122 2.122 0 0 0-1.973 0L6.396 21.01a.53.53 0 0 1-.77-.56l.881-5.139a2.122 2.122 0 0 0-.611-1.879L2.16 9.795a.53.53 0 0 1 .294-.906l5.165-.755a2.122 2.122 0 0 0 1.597-1.16z" fill="#FBBD12" stroke="#FBBD12" stroke-width="2"/>
<g transform="translate(2280.85,1125.58) scale(1.075)" stroke="#161616" stroke-width="2.046511627906977"><path d="M2.062 12.348a1 1 0 0 1 0-.696 10.75 10.75 0 0 1 19.876 0 1 1 0 0 1 0 .696 10.75 10.75 0 0 1-19.876 0"/><circle cx="12" cy="12" r="2.6"/></g>
<path transform="translate(805.10,1192.30)" d="M11.525 2.295a.53.53 0 0 1 .95 0l2.31 4.679a2.123 2.123 0 0 0 1.595 1.16l5.166.756a.53.53 0 0 1 .294.904l-3.736 3.638a2.123 2.123 0 0 0-.611 1.878l.882 5.14a.53.53 0 0 1-.771.56l-4.618-2.428a2.122 2.122 0 0 0-1.973 0L6.396 21.01a.53.53 0 0 1-.77-.56l.881-5.139a2.122 2.122 0 0 0-.611-1.879L2.16 9.795a.53.53 0 0 1 .294-.906l5.165-.755a2.122 2.122 0 0 0 1.597-1.16z" fill="#FBBD12" stroke="#FBBD12" stroke-width="2"/>
<path transform="translate(834.10,1192.30)" d="M11.525 2.295a.53.53 0 0 1 .95 0l2.31 4.679a2.123 2.123 0 0 0 1.595 1.16l5.166.756a.53.53 0 0 1 .294.904l-3.736 3.638a2.123 2.123 0 0 0-.611 1.878l.882 5.14a.53.53 0 0 1-.771.56l-4.618-2.428a2.122 2.122 0 0 0-1.973 0L6.396 21.01a.53.53 0 0 1-.77-.56l.881-5.139a2.122 2.122 0 0 0-.611-1.879L2.16 9.795a.53.53 0 0 1 .294-.906l5.165-.755a2.122 2.122 0 0 0 1.597-1.16z" fill="#FBBD12" stroke="#FBBD12" stroke-width="2"/>
<path transform="translate(863.10,1192.30)" d="M11.525 2.295a.53.53 0 0 1 .95 0l2.31 4.679a2.123 2.123 0 0 0 1.595 1.16l5.166.756a.53.53 0 0 1 .294.904l-3.736 3.638a2.123 2.123 0 0 0-.611 1.878l.882 5.14a.53.53 0 0 1-.771.56l-4.618-2.428a2.122 2.122 0 0 0-1.973 0L6.396 21.01a.53.53 0 0 1-.77-.56l.881-5.139a2.122 2.122 0 0 0-.611-1.879L2.16 9.795a.53.53 0 0 1 .294-.906l5.165-.755a2.122 2.122 0 0 0 1.597-1.16z" fill="#FBBD12" stroke="#FBBD12" stroke-width="2"/>
<path transform="translate(892.10,1192.30)" d="M11.525 2.295a.53.53 0 0 1 .95 0l2.31 4.679a2.123 2.123 0 0 0 1.595 1.16l5.166.756a.53.53 0 0 1 .294.904l-3.736 3.638a2.123 2.123 0 0 0-.611 1.878l.882 5.14a.53.53 0 0 1-.771.56l-4.618-2.428a2.122 2.122 0 0 0-1.973 0L6.396 21.01a.53.53 0 0 1-.77-.56l.881-5.139a2.122 2.122 0 0 0-.611-1.879L2.16 9.795a.53.53 0 0 1 .294-.906l5.165-.755a2.122 2.122 0 0 0 1.597-1.16z" fill="#FBBD12" stroke="#FBBD12" stroke-width="2"/>
<path transform="translate(921.10,1192.30)" d="M11.525 2.295a.53.53 0 0 1 .95 0l2.31 4.679a2.123 2.123 0 0 0 1.595 1.16l5.166.756a.53.53 0 0 1 .294.904l-3.736 3.638a2.123 2.123 0 0 0-.611 1.878l.882 5.14a.53.53 0 0 1-.771.56l-4.618-2.428a2.122 2.122 0 0 0-1.973 0L6.396 21.01a.53.53 0 0 1-.77-.56l.881-5.139a2.122 2.122 0 0 0-.611-1.879L2.16 9.795a.53.53 0 0 1 .294-.906l5.165-.755a2.122 2.122 0 0 0 1.597-1.16z" fill="#FBBD12" stroke="#FBBD12" stroke-width="2"/>
<g transform="translate(2280.85,1191.30) scale(1.075)" stroke="#161616" stroke-width="2.046511627906977"><path d="M2.062 12.348a1 1 0 0 1 0-.696 10.75 10.75 0 0 1 19.876 0 1 1 0 0 1 0 .696 10.75 10.75 0 0 1-19.876 0"/><circle cx="12" cy="12" r="2.6"/></g>
<path transform="translate(805.10,1258.02)" d="M11.525 2.295a.53.53 0 0 1 .95 0l2.31 4.679a2.123 2.123 0 0 0 1.595 1.16l5.166.756a.53.53 0 0 1 .294.904l-3.736 3.638a2.123 2.123 0 0 0-.611 1.878l.882 5.14a.53.53 0 0 1-.771.56l-4.618-2.428a2.122 2.122 0 0 0-1.973 0L6.396 21.01a.53.53 0 0 1-.77-.56l.881-5.139a2.122 2.122 0 0 0-.611-1.879L2.16 9.795a.53.53 0 0 1 .294-.906l5.165-.755a2.122 2.122 0 0 0 1.597-1.16z" fill="#FBBD12" stroke="#FBBD12" stroke-width="2"/>
<path transform="translate(834.10,1258.02)" d="M11.525 2.295a.53.53 0 0 1 .95 0l2.31 4.679a2.123 2.123 0 0 0 1.595 1.16l5.166.756a.53.53 0 0 1 .294.904l-3.736 3.638a2.123 2.123 0 0 0-.611 1.878l.882 5.14a.53.53 0 0 1-.771.56l-4.618-2.428a2.122 2.122 0 0 0-1.973 0L6.396 21.01a.53.53 0 0 1-.77-.56l.881-5.139a2.122 2.122 0 0 0-.611-1.879L2.16 9.795a.53.53 0 0 1 .294-.906l5.165-.755a2.122 2.122 0 0 0 1.597-1.16z" fill="#FBBD12" stroke="#FBBD12" stroke-width="2"/>
<path transform="translate(863.10,1258.02)" d="M11.525 2.295a.53.53 0 0 1 .95 0l2.31 4.679a2.123 2.123 0 0 0 1.595 1.16l5.166.756a.53.53 0 0 1 .294.904l-3.736 3.638a2.123 2.123 0 0 0-.611 1.878l.882 5.14a.53.53 0 0 1-.771.56l-4.618-2.428a2.122 2.122 0 0 0-1.973 0L6.396 21.01a.53.53 0 0 1-.77-.56l.881-5.139a2.122 2.122 0 0 0-.611-1.879L2.16 9.795a.53.53 0 0 1 .294-.906l5.165-.755a2.122 2.122 0 0 0 1.597-1.16z" fill="#FBBD12" stroke="#FBBD12" stroke-width="2"/>
<path transform="translate(892.10,1258.02)" d="M11.525 2.295a.53.53 0 0 1 .95 0l2.31 4.679a2.123 2.123 0 0 0 1.595 1.16l5.166.756a.53.53 0 0 1 .294.904l-3.736 3.638a2.123 2.123 0 0 0-.611 1.878l.882 5.14a.53.53 0 0 1-.771.56l-4.618-2.428a2.122 2.122 0 0 0-1.973 0L6.396 21.01a.53.53 0 0 1-.77-.56l.881-5.139a2.122 2.122 0 0 0-.611-1.879L2.16 9.795a.53.53 0 0 1 .294-.906l5.165-.755a2.122 2.122 0 0 0 1.597-1.16z" fill="#FBBD12" stroke="#FBBD12" stroke-width="2"/>
<path transform="translate(921.10,1258.02)" d="M11.525 2.295a.53.53 0 0 1 .95 0l2.31 4.679a2.123 2.123 0 0 0 1.595 1.16l5.166.756a.53.53 0 0 1 .294.904l-3.736 3.638a2.123 2.123 0 0 0-.611 1.878l.882 5.14a.53.53 0 0 1-.771.56l-4.618-2.428a2.122 2.122 0 0 0-1.973 0L6.396 21.01a.53.53 0 0 1-.77-.56l.881-5.139a2.122 2.122 0 0 0-.611-1.879L2.16 9.795a.53.53 0 0 1 .294-.906l5.165-.755a2.122 2.122 0 0 0 1.597-1.16z" fill="none" stroke="#D9D9D9" stroke-width="1.5"/>
<g transform="translate(2280.85,1257.02) scale(1.075)" stroke="#161616" stroke-width="2.046511627906977"><path d="M2.062 12.348a1 1 0 0 1 0-.696 10.75 10.75 0 0 1 19.876 0 1 1 0 0 1 0 .696 10.75 10.75 0 0 1-19.876 0"/><circle cx="12" cy="12" r="2.6"/></g>
<path transform="translate(805.10,1323.74)" d="M11.525 2.295a.53.53 0 0 1 .95 0l2.31 4.679a2.123 2.123 0 0 0 1.595 1.16l5.166.756a.53.53 0 0 1 .294.904l-3.736 3.638a2.123 2.123 0 0 0-.611 1.878l.882 5.14a.53.53 0 0 1-.771.56l-4.618-2.428a2.122 2.122 0 0 0-1.973 0L6.396 21.01a.53.53 0 0 1-.77-.56l.881-5.139a2.122 2.122 0 0 0-.611-1.879L2.16 9.795a.53.53 0 0 1 .294-.906l5.165-.755a2.122 2.122 0 0 0 1.597-1.16z" fill="#FBBD12" stroke="#FBBD12" stroke-width="2"/>
<path transform="translate(834.10,1323.74)" d="M11.525 2.295a.53.53 0 0 1 .95 0l2.31 4.679a2.123 2.123 0 0 0 1.595 1.16l5.166.756a.53.53 0 0 1 .294.904l-3.736 3.638a2.123 2.123 0 0 0-.611 1.878l.882 5.14a.53.53 0 0 1-.771.56l-4.618-2.428a2.122 2.122 0 0 0-1.973 0L6.396 21.01a.53.53 0 0 1-.77-.56l.881-5.139a2.122 2.122 0 0 0-.611-1.879L2.16 9.795a.53.53 0 0 1 .294-.906l5.165-.755a2.122 2.122 0 0 0 1.597-1.16z" fill="#FBBD12" stroke="#FBBD12" stroke-width="2"/>
<path transform="translate(863.10,1323.74)" d="M11.525 2.295a.53.53 0 0 1 .95 0l2.31 4.679a2.123 2.123 0 0 0 1.595 1.16l5.166.756a.53.53 0 0 1 .294.904l-3.736 3.638a2.123 2.123 0 0 0-.611 1.878l.882 5.14a.53.53 0 0 1-.771.56l-4.618-2.428a2.122 2.122 0 0 0-1.973 0L6.396 21.01a.53.53 0 0 1-.77-.56l.881-5.139a2.122 2.122 0 0 0-.611-1.879L2.16 9.795a.53.53 0 0 1 .294-.906l5.165-.755a2.122 2.122 0 0 0 1.597-1.16z" fill="#FBBD12" stroke="#FBBD12" stroke-width="2"/>
<path transform="translate(892.10,1323.74)" d="M11.525 2.295a.53.53 0 0 1 .95 0l2.31 4.679a2.123 2.123 0 0 0 1.595 1.16l5.166.756a.53.53 0 0 1 .294.904l-3.736 3.638a2.123 2.123 0 0 0-.611 1.878l.882 5.14a.53.53 0 0 1-.771.56l-4.618-2.428a2.122 2.122 0 0 0-1.973 0L6.396 21.01a.53.53 0 0 1-.77-.56l.881-5.139a2.122 2.122 0 0 0-.611-1.879L2.16 9.795a.53.53 0 0 1 .294-.906l5.165-.755a2.122 2.122 0 0 0 1.597-1.16z" fill="#FBBD12" stroke="#FBBD12" stroke-width="2"/>
<path transform="translate(921.10,1323.74)" d="M11.525 2.295a.53.53 0 0 1 .95 0l2.31 4.679a2.123 2.123 0 0 0 1.595 1.16l5.166.756a.53.53 0 0 1 .294.904l-3.736 3.638a2.123 2.123 0 0 0-.611 1.878l.882 5.14a.53.53 0 0 1-.771.56l-4.618-2.428a2.122 2.122 0 0 0-1.973 0L6.396 21.01a.53.53 0 0 1-.77-.56l.881-5.139a2.122 2.122 0 0 0-.611-1.879L2.16 9.795a.53.53 0 0 1 .294-.906l5.165-.755a2.122 2.122 0 0 0 1.597-1.16z" fill="#FBBD12" stroke="#FBBD12" stroke-width="2"/>
<g transform="translate(2280.85,1322.74) scale(1.075)" stroke="#161616" stroke-width="2.046511627906977"><path d="M2.062 12.348a1 1 0 0 1 0-.696 10.75 10.75 0 0 1 19.876 0 1 1 0 0 1 0 .696 10.75 10.75 0 0 1-19.876 0"/><circle cx="12" cy="12" r="2.6"/></g>
<g transform="translate(23.23,174.10) scale(1.056)" stroke="#161616" stroke-width="1.8939393939393938"><path d="M15 21v-8a1 1 0 0 0-1-1h-4a1 1 0 0 0-1 1v8"/><path d="M3 10a2 2 0 0 1 .709-1.528l7-5.999a2 2 0 0 1 2.582 0l7 5.999A2 2 0 0 1 21 10v9a2 2 0 0 1-2 2H5a2 2 0 0 1-2-2z"/></g>
<g transform="translate(22.70,231.40) scale(1.1)" stroke="#161616" stroke-width="1.8181818181818181"><path d="M12 17.75l-6.172 3.245l1.179 -6.873l-5 -4.867l6.9 -1l3.086 -6.253l3.086 6.253l6.9 1l-5 4.867l1.179 6.873z"/></g>
<g transform="translate(22.93,289.30) scale(1.086)" stroke="#161616" stroke-width="1.8416206261510129"><path d="M16 21v-2a4 4 0 0 0-4-4H6a4 4 0 0 0-4 4v2"/><circle cx="9" cy="7" r="4"/><path d="M22 21v-2a4 4 0 0 0-3-3.87"/><path d="M16 3.13a4 4 0 0 1 0 7.75"/></g>
<g transform="translate(23.08,347.16) scale(1.06)" stroke="#161616" stroke-width="1.8867924528301885"><rect width="16" height="13" x="6" y="4" rx="2"/><path d="m22 7-7.1 3.78c-.57.3-1.23.3-1.8 0L6 7"/><path d="M2 8v11c0 1.1.9 2 2 2h14"/></g>
<g transform="translate(23.08,404.80) scale(1.06)" stroke="#161616" stroke-width="1.8867924528301885"><path d="M3 3v16a2 2 0 0 0 2 2h16"/><path d="m19 9-5 5-4-4-3 3"/></g>
<g transform="translate(23.18,462.68) scale(1.06)" stroke="#161616" stroke-width="1.8867924528301885"><path d="M9.671 4.136a2.34 2.34 0 0 1 4.659 0 2.34 2.34 0 0 0 3.319 1.915 2.34 2.34 0 0 1 2.33 4.033 2.34 2.34 0 0 0 0 3.831 2.34 2.34 0 0 1-2.33 4.033 2.34 2.34 0 0 0-3.319 1.915 2.34 2.34 0 0 1-4.659 0 2.34 2.34 0 0 0-3.318-1.915 2.34 2.34 0 0 1-2.33-4.033 2.34 2.34 0 0 0 0-3.831A2.34 2.34 0 0 1 6.35 6.051a2.34 2.34 0 0 0 3.319-1.915"/><circle cx="12" cy="12" r="3"/></g>
<g transform="translate(23.28,1191.88) scale(1.06)" stroke="#161616" stroke-width="1.8867924528301885"><circle cx="12" cy="12" r="10"/><path d="m4.93 4.93 4.24 4.24"/><path d="m14.83 9.17 4.24-4.24"/><path d="m14.83 14.83 4.24 4.24"/><path d="m9.17 14.83-4.24 4.24"/><circle cx="12" cy="12" r="4"/></g>
<g transform="translate(23.14,1249.50) scale(1.06)" stroke="#161616" stroke-width="1.8867924528301885"><path d="M14.536 21.686a.5.5 0 0 0 .937-.024l6.5-19a.496.496 0 0 0-.635-.635l-19 6.5a.5.5 0 0 0-.024.937l7.93 3.18a2 2 0 0 1 1.112 1.11z"/><path d="m21.854 2.147-10.94 10.939"/></g>
<g transform="translate(102.76,102.46) scale(1.08)" stroke="#161616" stroke-width="1.8518518518518516"><rect width="18" height="18" x="3" y="3" rx="2"/><path d="M9 3v18"/></g>
<defs>
<linearGradient id="lg" x1="211" y1="103" x2="199" y2="128" gradientUnits="userSpaceOnUse"><stop offset="0" stop-color="#8A12D2"/><stop offset="0.5" stop-color="#6448D6"/><stop offset="1" stop-color="#3A8EE0"/></linearGradient>
</defs>
<g stroke="url(#lg)" stroke-width="2.7" fill="none" stroke-linecap="round">
<path d="M211.1 107.2C208 104.5 205.5 103.8 203.4 103.8C200 103.8 198.9 106.5 198.9 109.2C198.9 111.8 200.5 114 201.9 115.9"/>
<path d="M195.2 108.4C194.8 113.5 196.3 117.2 198.7 119.8"/>
<path d="M206.1 114.9C207.8 117 209.1 119.5 209.1 121.6C209.1 125 206.5 127 204.4 127C201.5 127 199 125.8 196.7 123.8"/>
<path d="M209.1 111.4C211.5 113.5 213.1 116 213.1 118.5C213.1 120 212.8 121.5 212.6 122.6"/>
</g>
<defs><clipPath id="avc"><circle cx="35.75" cy="109.5" r="23"/></clipPath>
<radialGradient id="avg" cx="0.35" cy="0.6" r="0.7"><stop offset="0" stop-color="#2A64A4"/><stop offset="1" stop-color="#17336E"/></radialGradient></defs>
<circle cx="35.75" cy="109.5" r="23" fill="url(#avg)"/>
<g clip-path="url(#avc)" stroke="none">
<path d="M24 100 L31 104 L29 108 L22 104 Z" fill="#2F7F86" opacity="0.8"/>
<path d="M46 101 L53 104 L53 119 L47 118 Z" fill="#5B46A6"/>
<path d="M33 100 C34 94 44 93 47 99 L46 103 C42 101 38 102 34 104 Z" fill="#A8407C"/>
<path d="M37 96.5 C39 95.5 42 95.5 44 97 L42 98.5 C40 98 38.5 98 37 98.5 Z" fill="#E27AA6"/>
<path d="M31.5 103 C32 100 35 99.5 38 100 C41 100 44 101 45 104 C45 108 42.5 110.5 38 110.5 C34 110.5 31.5 107 31.5 103 Z" fill="#F1B482"/>
<circle cx="35.2" cy="104.3" r="0.9" fill="#3A2018"/><circle cx="40.3" cy="104" r="0.9" fill="#3A2018"/>
<path d="M35.5 107.2 Q37.5 108.8 39.5 107" stroke="#5A2A1A" stroke-width="0.9" fill="none"/>
<rect x="34" y="110.5" width="12" height="7" rx="1" fill="#C7B23F"/>
<rect x="37" y="110.5" width="4" height="6" fill="#3E8A52"/>
<path d="M22.5 110.5 L33.5 112 L33.5 115 L22.5 113.8 Z" fill="#E0653A"/>
<rect x="29" y="111.3" width="4" height="3.4" fill="#EDC468"/>
<path d="M32 117 L46 117 L48 123 L40 126 L34 124 Z" fill="#7747B6"/>
<ellipse cx="30" cy="125.5" rx="4" ry="3" fill="#EA6A38"/>
<path d="M46 118 L51 118 L53 128 L48 129 Z" fill="#B9382A"/>
<circle cx="34.5" cy="91.2" r="1" fill="#CFE6FF"/><circle cx="17" cy="106.8" r="1" fill="#CFE6FF"/><circle cx="17.8" cy="114.5" r="1" fill="#CFE6FF"/>
<circle cx="22" cy="121" r="1" fill="#CFE6FF"/><circle cx="38" cy="127.5" r="0.9" fill="#9FC8F0"/><circle cx="53" cy="102" r="0.8" fill="#9FC8F0"/>
</g>
<circle cx="20.5" cy="95.5" r="6.2" fill="#5D8E3C" opacity="0.85"/>
<path d="M20.5 91l1.3 2.9 3.1.3-2.35 2.1.7 3.1-2.75-1.6-2.75 1.6.7-3.1-2.35-2.1 3.1-.3z" fill="#F5E94A"/>
<circle cx="55" cy="89" r="1.4" fill="#F3DFA0" opacity="0.8"/><circle cx="14.5" cy="126.5" r="1.3" fill="#F3DFA0" opacity="0.7"/>
</svg>
</body></html>
